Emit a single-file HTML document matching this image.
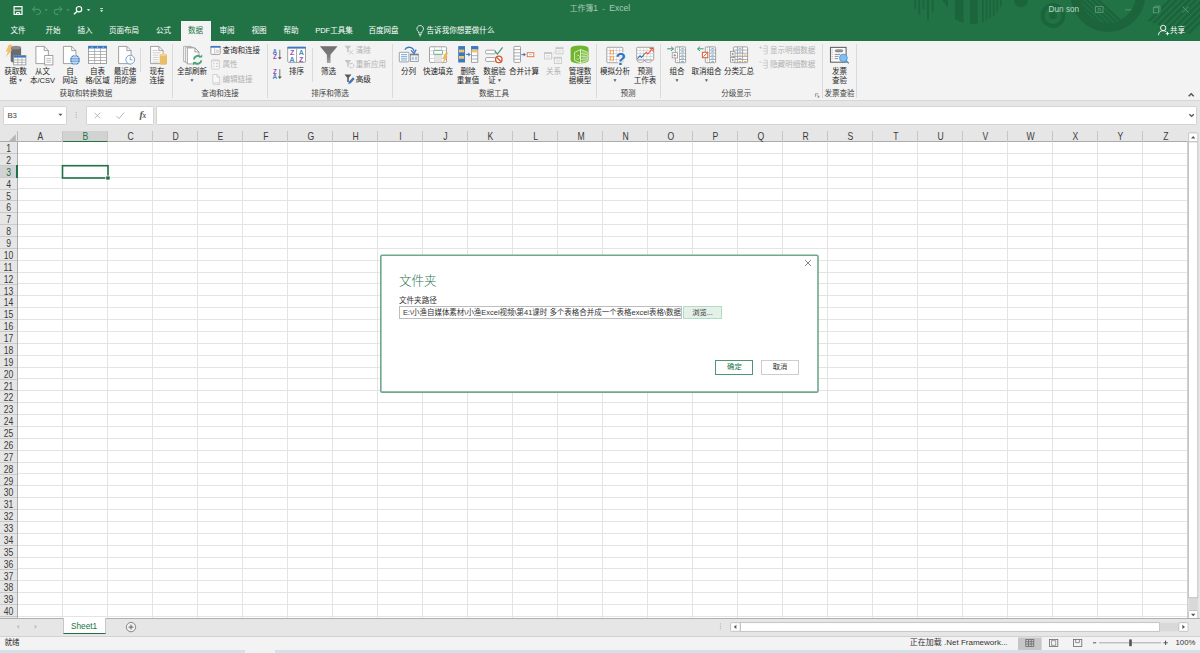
<!DOCTYPE html>
<html lang="zh-CN">
<head>
<meta charset="utf-8">
<title>工作簿1 - Excel</title>
<style>
*{box-sizing:border-box;margin:0;padding:0}
html,body{width:1200px;height:653px;overflow:hidden;background:#fff}
body{font-family:"Liberation Sans","Noto Sans CJK SC",sans-serif;color:#262626;position:relative;-webkit-font-smoothing:antialiased}
.abs{position:absolute}
#app{position:absolute;left:0;top:0;width:1200px;height:653px;overflow:hidden;background:#fff}
/* ---------- title + tabs ---------- */
#top{position:absolute;left:0;top:0;width:1200px;height:41px;background:#217346;overflow:hidden}
#title{position:absolute;left:0;width:1200px;top:3.1px;text-align:center;font-size:7.8px;line-height:11px;color:#a9cbb7;white-space:pre}
#user{position:absolute;left:1048.6px;top:3.6px;font-size:8.2px;line-height:11px;color:#bdd6c7}
.tab{position:absolute;top:24px;height:13px;line-height:13px;font-size:7.55px;color:#fff;white-space:nowrap;transform:translateX(-50%)}
#tabact{position:absolute;left:180.5px;top:21px;width:30.5px;height:20px;background:#f3f3f3}
.tab.act{color:#217346}
/* ---------- ribbon ---------- */
#ribbon{position:absolute;left:0;top:41px;width:1200px;height:59.5px;background:#f3f3f3;border-bottom:1px solid #d6d6d6;overflow:hidden}
.lb{position:absolute;top:26.8px;font-size:7.55px;line-height:8.8px;color:#262626;text-align:center;white-space:nowrap;transform:translateX(-50%)}
.sm{position:absolute;font-size:7.55px;line-height:10px;color:#262626;white-space:nowrap}
.dis{color:#b1b1b1}
.grp{position:absolute;top:47.9px;font-size:7.55px;line-height:10px;color:#444;white-space:nowrap;transform:translateX(-50%)}
.sep{position:absolute;top:2.5px;width:1px;height:54px;background:#dadada}
.cr{position:relative;top:-1.1px;font-size:5.6px;color:#5a5a5a;font-family:"DejaVu Sans",sans-serif}
.ico{position:absolute;overflow:visible}
.car{position:absolute;width:0;height:0;border-left:2px solid transparent;border-right:2px solid transparent;border-top:2.2px solid #555}
/* ---------- formula bar ---------- */
#fbar{position:absolute;left:0;top:101px;width:1200px;height:29.5px;background:#e6e6e6}
.fbox{position:absolute;top:5.4px;height:18.2px;background:#fff;border:1px solid #d4d4d4;border-radius:1.2px}
/* ---------- grid ---------- */
#colhdr{position:absolute;left:0;top:130.5px;width:1188px;height:11.5px;background:#e6e6e6;border-bottom:1px solid #ababab}
.ch{position:absolute;top:0;width:45px;height:11.5px;line-height:12.6px;font-size:9.8px;padding-left:2.2px;text-align:center;color:#3b3b3b;border-right:1px solid #c6c6c6}
#rowhdr{position:absolute;left:0;top:142px;width:17.5px;height:476.5px;background:#e6e6e6;border-right:1px solid #ababab;overflow:hidden}
.rh{position:absolute;left:0;width:16.5px;height:11.875px;line-height:13.7px;font-size:9.8px;text-align:center;color:#3b3b3b;border-bottom:1px solid #c9c9c9}
#cells{position:absolute;left:17.5px;top:142px;width:1170px;height:476.5px;background-color:#fff;border-right:1px solid #b9b9b9;
 background-image:repeating-linear-gradient(to right,transparent 0,transparent 44px,#e4e4e4 44px,#e4e4e4 45px),repeating-linear-gradient(to bottom,transparent 0,transparent 10.875px,#e4e4e4 10.875px,#e4e4e4 11.875px)}
/* ---------- bottom ---------- */
#tabbar{position:absolute;left:0;top:618.3px;width:1200px;height:18px;background:#e6e6e6;border-top:1px solid #b0b0b0}
#status{position:absolute;left:0;top:636px;width:1200px;height:14px;background:#f3f3f3;border-top:1px solid #d2d2d2}
#strip{position:absolute;left:0;top:650px;width:1200px;height:3px;background:#d3e2ea}
.st{position:absolute;font-size:7.8px;line-height:10px;color:#333;white-space:nowrap}
/* ---------- dialog ---------- */
#dlg{position:absolute;left:381px;top:256px;width:436px;height:135px}

.ch span{display:inline-block;transform:scale(.88,1.1)}
.rh span{display:inline-block;transform:scale(.88,1.08)}
.ch.sel{background:#d2d2d2;color:#217346;border-bottom:1.5px solid #217346;height:11.8px}
.rh.sel{background:#d2d2d2;color:#217346;width:17.5px;border-right:1.5px solid #217346}
#selcell{position:absolute;left:61.7px;top:164.8px;width:47.2px;height:14px;border:1.6px solid #217346}
#selh{position:absolute;left:105.6px;top:175.6px;width:4.8px;height:4.6px;background:#1d6a3f;border:.8px solid #fff}
.dtitle{position:absolute;left:17.9px;top:16.6px;font-size:12.6px;line-height:17px;color:#2f7552;font-weight:300}
.dlabel{position:absolute;left:17.9px;top:39.5px;font-size:7.6px;line-height:10px;color:#333}
.dinput{position:absolute;left:17.9px;top:49.7px;width:283px;height:13.4px;border:1px solid #bdbdbd;background:#fff;font-size:7.47px;line-height:12.6px;padding-left:3px;color:#333;white-space:nowrap;overflow:hidden}
.dbtn{position:absolute;height:14.4px;font-size:7.3px;line-height:12.4px;text-align:center;color:#333;background:#fff}
</style>
</head>
<body>
<div id="app">

<!-- ================= TOP (title bar + tabs) ================= -->
<div id="top">
<svg class="ico" style="left:0;top:0" width="1200" height="41" viewBox="0 0 1200 41">
  <defs>
    <clipPath id="cpHalf"><circle cx="972" cy="-9" r="33"/></clipPath>
    <clipPath id="cpRing"><circle cx="1108" cy="-5.4" r="28"/></clipPath>
    <clipPath id="cpR"><path d="M1146 0 h54 v34 h-20 l-34 -14z"/></clipPath>
  </defs>
  <!-- decorative pattern -->
  <g fill="#1c653c" stroke="none">
    <rect x="914.3" y="0" width="1.6" height="9"/><rect x="918.3" y="0" width="1.8" height="14.5"/><rect x="922.6" y="0" width="1.6" height="9"/>
    <rect x="927" y="0" width="2" height="20"/><rect x="931.8" y="0" width="1.8" height="12.5"/>
    <path d="M942 0 h6 v8z"/>
    <g clip-path="url(#cpHalf)">
      <rect x="955" y="0" width="8.5" height="30"/><rect x="970" y="0" width="7.5" height="30"/>
      <rect x="982" y="0" width="1.8" height="30"/><rect x="985.6" y="0" width="1.8" height="30"/><rect x="989.2" y="0" width="1.8" height="30"/><rect x="992.8" y="0" width="1.8" height="30"/><rect x="996.4" y="0" width="1.8" height="30"/><rect x="1000" y="0" width="1.8" height="30"/>
    </g>
    <circle cx="1021" cy="0" r="7.2"/>
  </g>
  <circle cx="1053" cy="15.5" r="10.4" fill="none" stroke="#1c653c" stroke-width="4"/>
  <circle cx="1053" cy="15.5" r="3.8" fill="#1c653c"/>
  <circle cx="1108" cy="-5.4" r="32.7" fill="none" stroke="#1c653c" stroke-width="9.4"/>
  <g clip-path="url(#cpRing)" stroke="#1c653c" stroke-width="2.4">
    <path d="M1066 -4 l48 44 M1071.5 -4 l48 44 M1077 -4 l48 44 M1082.5 -4 l48 44 M1088 -4 l48 44 M1093.5 -4 l48 44"/>
  </g>
  <g clip-path="url(#cpR)" stroke="#1c653c" stroke-width="2.8">
    <path d="M1172 -2 l-36 36 M1178.5 -2 l-36 36 M1185 -2 l-36 36 M1191.5 -2 l-36 36 M1198 -2 l-36 36 M1204.5 -2 l-36 36 M1211 -2 l-36 36 M1217.5 -2 l-36 36 M1224 -2 l-36 36"/>
  </g>
  <!-- QAT: save -->
  <g fill="none" stroke="#fff" stroke-width="1">
    <path d="M14.1 6.6 h7.9 v7.7 h-7.9z" stroke-width="1.2"/><path d="M14.6 10.1 h7" stroke-width="1"/><path d="M16.5 14.2 v-1.7 h3.1 v1.7" stroke-width="1"/>
  </g>
  <!-- undo / redo (faded) -->
  <g fill="none" stroke="#5a9a77" stroke-width="1">
    <path d="M32.6 9.2 h5 a3 2.6 0 0 1 0 5.2 h-1.2"/><path d="M35.2 6.6 l-2.7 2.6 2.7 2.6"/>
    <path d="M62 9.2 h-5 a3 2.6 0 0 0 0 5.2 h1.2"/><path d="M59.4 6.6 l2.7 2.6 -2.7 2.6"/>
  </g>
  <path d="M44.6 9.2 h3 l-1.5 1.7z M66.6 9.2 h3 l-1.5 1.7z" fill="#5a9a77"/>
  <!-- search -->
  <circle cx="79" cy="9.2" r="2.7" fill="none" stroke="#fff" stroke-width="1.2"/><path d="M77 11.4 l-3 2.8" stroke="#fff" stroke-width="1.4"/>
  <path d="M86.8 9.2 h3.4 l-1.7 1.9z" fill="#fff"/>
  <path d="M100.2 8.6 h2.8" stroke="#fff" stroke-width=".8"/><path d="M100 10.2 h3.2 l-1.6 1.9z" fill="#fff"/>
  <!-- window controls (faded) -->
  <g fill="none" stroke="#5c9b79" stroke-width=".9">
    <rect x="1095.4" y="6.6" width="7.6" height="5.8"/><path d="M1098 8.6 h2.4 v2.2 h-2.4z" stroke-width=".7"/>
    <path d="M1125.2 9.8 h6"/>
    <rect x="1153.4" y="7.6" width="5.2" height="5.2"/><path d="M1154.8 7.6 v-1.4 h5.2 v5.2 h-1.4"/>
    <path d="M1182.6 6.6 l6 6 M1188.6 6.6 l-6 6"/>
  </g>
  <!-- lightbulb -->
  <g fill="none" stroke="#fff" stroke-width=".8">
    <path d="M418.6 33 v-1.3 a3.3 3.3 0 1 1 3.2 0 v1.3z"/><path d="M418.9 34.5 h2.6 M419.4 35.9 h1.6"/>
  </g>
  <!-- share -->
  <g fill="none" stroke="#fff" stroke-width=".9">
    <circle cx="1163.2" cy="28" r="2.7"/><path d="M1158.4 35.2 a4.8 4.6 0 0 1 8 -3.4"/><path d="M1165.8 33.6 h3.4 M1167.5 31.9 v3.4"/>
  </g>
</svg>
  <div id="title">工作簿<span style="font-size:8.4px">1</span>  -  <span style="font-size:8.6px">Excel</span></div>
  <div id="user">Dun son</div>
  <div id="tabact"></div>
  <div class="tab" style="left:18px">文件</div>
  <div class="tab" style="left:53px">开始</div>
  <div class="tab" style="left:85px">插入</div>
  <div class="tab" style="left:124px">页面布局</div>
  <div class="tab" style="left:163.5px">公式</div>
  <div class="tab act" style="left:195.5px">数据</div>
  <div class="tab" style="left:227px">审阅</div>
  <div class="tab" style="left:259px">视图</div>
  <div class="tab" style="left:291px">帮助</div>
  <div class="tab" style="left:334px">PDF工具集</div>
  <div class="tab" style="left:383.5px">百度网盘</div>
  <div class="tab" style="left:460.5px">告诉我你想要做什么</div>
  <div class="tab" style="left:1177.5px">共享</div>
</div>

<!-- ================= RIBBON ================= -->
<div id="ribbon">
<svg id="ricons" class="ico" style="left:0;top:0" width="1200" height="60" viewBox="0 41 1200 60">
<defs>
  <linearGradient id="fg" x1="0" y1="0" x2="0" y2="1"><stop offset="0" stop-color="#6f6f6f"/><stop offset=".6" stop-color="#7d7d7d"/><stop offset="1" stop-color="#a9a9a9"/></linearGradient>
</defs>
<!-- get data -->
<g>
  <path d="M10.7 47.3 h10.4 v13.4 a5.2 1.9 0 0 1 -10.4 0z" fill="#6b6b6b"/>
  <ellipse cx="15.9" cy="47.6" rx="5.2" ry="1.9" fill="#8e8e8e"/>
  <path d="M8.9 44.8 h3.6 l-2.5 4.8 h2.3 l-6.6 8 2.2 -6 h-2.2z" fill="#f2c06a"/>
  <rect x="13.7" y="55.6" width="12.2" height="9.3" fill="#fff" stroke="#8c8c8c" stroke-width=".8"/>
  <rect x="13.7" y="55.6" width="12.2" height="2" fill="#3a78c3"/>
  <path d="M13.7 60 h12.2 M13.7 62.4 h12.2 M17.8 57.6 v7.3 M21.9 57.6 v7.3" stroke="#9a9a9a" stroke-width=".7" fill="none"/>
</g>
<!-- from text/csv -->
<g>
  <g transform="translate(35.5 46.0)"><path d="M.4.4 h8.3 l4.2 4.2 v13 h-12.5z" fill="#fff" stroke="#8c8c8c" stroke-width=".8"/><path d="M8.7.4 v4.2 h4.2" fill="none" stroke="#8c8c8c" stroke-width=".8"/></g>
  <rect x="44.7" y="55.6" width="8.2" height="9.3" fill="#fff" stroke="#8c8c8c" stroke-width=".8"/>
  <path d="M46.4 58.4 h4.8 M46.4 60.3 h4.8 M46.4 62.2 h4.8" stroke="#a5a5a5" stroke-width=".7"/>
</g>
<!-- from web -->
<g>
  <g transform="translate(63.0 46.0)"><path d="M.4.4 h8.3 l4.2 4.2 v13 h-12.5z" fill="#fff" stroke="#8c8c8c" stroke-width=".8"/><path d="M8.7.4 v4.2 h4.2" fill="none" stroke="#8c8c8c" stroke-width=".8"/></g>
  <circle cx="75" cy="60" r="4.9" fill="#4a86c8"/>
  <g stroke="#fff" stroke-width=".6" fill="none"><ellipse cx="75" cy="60" rx="2.1" ry="4.4"/><path d="M70.4 60 h9.2 M75 55.4 v9.2 M71.2 57.6 h7.6 M71.2 62.4 h7.6"/></g>
</g>
<!-- from table/range -->
<g>
  <rect x="88.6" y="46.3" width="17.9" height="17.3" fill="#fff" stroke="#8c8c8c" stroke-width=".8"/>
  <rect x="88.2" y="45.9" width="18.7" height="2.6" fill="#3a78c3"/>
  <path d="M91.5 47.2 h1 M97 47.2 h1 M102.7 47.2 h1" stroke="#fff" stroke-width=".8"/>
  <path d="M88.6 51.5 h17.9 M88.6 54.5 h17.9 M88.6 57.5 h17.9 M88.6 60.5 h17.9 M94.6 48.5 v15 M100.5 48.5 v15" stroke="#9a9a9a" stroke-width=".7" fill="none"/>
</g>
<!-- recent sources -->
<g>
  <g transform="translate(118.2 46.0)"><path d="M.4.4 h8.3 l4.2 4.2 v13 h-12.5z" fill="#fff" stroke="#8c8c8c" stroke-width=".8"/><path d="M8.7.4 v4.2 h4.2" fill="none" stroke="#8c8c8c" stroke-width=".8"/></g>
  <circle cx="130.2" cy="59.7" r="4.4" fill="#fff" stroke="#5e9ad4" stroke-width=".9"/>
  <path d="M130.2 56.7 v3.2 h2.2" stroke="#777" stroke-width=".7" fill="none"/>
</g>
<!-- existing connections -->
<g>
  <g transform="translate(150.2 46.0)"><path d="M.4.4 h8.3 l4.2 4.2 v13 h-12.5z" fill="#fff" stroke="#8c8c8c" stroke-width=".8"/><path d="M8.7.4 v4.2 h4.2" fill="none" stroke="#8c8c8c" stroke-width=".8"/></g>
  <path d="M152.6 50.5 h5 M152.6 52.8 h8 M152.6 55.1 h6 M152.6 57.4 h6 M152.6 59.7 h6 M152.6 62 h6" stroke="#b5b5b5" stroke-width=".7"/>
  <path d="M159.6 54.6 h7.4 v8.8 a3.7 1.3 0 0 1 -7.4 0z" fill="#e9bd6a"/>
  <ellipse cx="163.3" cy="54.8" rx="3.7" ry="1.3" fill="#f3d28f"/>
</g>
<!-- refresh all -->
<g>
  <path d="M183.6 46.4 h7.5 v15 h-7.5z" fill="#fff" stroke="#a3a3a3" stroke-width=".8"/>
  <path d="M185.4 47.2 h7.5 v15.4 h-7.5z" fill="#fff" stroke="#a3a3a3" stroke-width=".8"/>
  <path d="M187.3 47.9 h7.6 l4 4 v12 h-11.6z" fill="#fff" stroke="#8c8c8c" stroke-width=".8"/>
  <path d="M194.9 47.9 v4 h4" fill="none" stroke="#8c8c8c" stroke-width=".8"/>
  <circle cx="197.6" cy="59.8" r="5" fill="#f3f3f3"/>
  <path d="M193.9 59.3 a3.8 3.8 0 0 1 6.6 -2.2" fill="none" stroke="#4aa37a" stroke-width="1.9"/>
  <path d="M201.3 60.3 a3.8 3.8 0 0 1 -6.6 2.2" fill="none" stroke="#4aa37a" stroke-width="1.9"/>
  <path d="M199 57.6 h3.2 v-3.2z M196.2 62 h-3.2 v3.2z" fill="#4aa37a"/>
</g>
<!-- queries & connections small -->
<g>
  <rect x="210.9" y="46.4" width="9.3" height="8" rx=".8" fill="#fff" stroke="#8c8c8c" stroke-width=".8"/>
  <rect x="210.5" y="46" width="10.1" height="1.7" fill="#3a78c3"/>
  <rect x="215.6" y="49.4" width="3.4" height="3.6" fill="#dcdcdc"/>
  <path d="M214.6 48 v6.4" stroke="#a9a9a9" stroke-width=".6"/>
</g>
<!-- properties (disabled) -->
<g>
  <rect x="211.7" y="59.8" width="7.8" height="9.2" rx=".6" fill="#f8f8f8" stroke="#c9c9c9" stroke-width=".8"/>
  <path d="M211.7 61 h7.8" stroke="#c9c9c9" stroke-width=".9"/>
  <path d="M213.3 63.7 h1.4 M216 63.7 h2.2 M213.3 66.4 h1.4 M216 66.4 h2.2" stroke="#cbb7d4" stroke-width=".9"/>
</g>
<!-- edit links (disabled) -->
<g>
  <path d="M212.8 74.5 h4.2 l2.6 2.6 v6.8 h-6.8z" fill="#f8f8f8" stroke="#cacaca" stroke-width=".8"/>
  <path d="M217 74.5 v2.6 h2.6" fill="none" stroke="#cacaca" stroke-width=".8"/>
  <path d="M215 82.6 h1.8 a1 1 0 0 1 0 2 h-1.8 a1 1 0 0 1 0 -2z M217.6 82.6 h1.4 a1 1 0 0 1 0 2 h-1.4" fill="#f3f3f3" stroke="#c2c2c2" stroke-width=".6"/>
</g>
<!--G1-->
<!-- sort AZ / ZA -->
<g font-family="Liberation Sans, sans-serif" font-weight="bold" font-size="6.3" text-anchor="middle">
  <text x="274.9" y="54.2" fill="#4a86c8">A</text><text x="274.9" y="59.4" fill="#9a4db0">Z</text>
  <path d="M279.8 49.8 v8.4" stroke="#555" stroke-width=".8"/><path d="M277.9 57.2 h3.8 l-1.9 2.3z" fill="#555"/>
  <text x="274.9" y="73.6" fill="#9a4db0">Z</text><text x="274.9" y="78.8" fill="#4a86c8">A</text>
  <path d="M279.8 69.2 v8.4" stroke="#555" stroke-width=".8"/><path d="M277.9 76.6 h3.8 l-1.9 2.3z" fill="#555"/>
</g>
<!-- sort big -->
<g font-family="Liberation Sans, sans-serif" font-weight="bold" font-size="7" text-anchor="middle">
  <rect x="287.7" y="47.2" width="17.8" height="15.2" rx="1.2" fill="#fff" stroke="#8c8c8c" stroke-width=".8"/>
  <rect x="287.3" y="46.8" width="18.6" height="1.8" fill="#3a78c3"/>
  <path d="M296.6 48.6 v13.8" stroke="#8c8c8c" stroke-width=".8"/>
  <text x="292.1" y="55.4" fill="#9a4db0">Z</text><text x="292.1" y="61.7" fill="#4a86c8">A</text>
  <text x="301.2" y="55.4" fill="#4a86c8">A</text><text x="301.2" y="61.7" fill="#9a4db0">Z</text>
</g>
<!-- filter big -->
<path d="M319.9 46.3 h17.6 l-7 8.4 v8.3 h-3.6 v-8.3z" fill="url(#fg)"/>
<!-- clear (disabled) -->
<g>
  <path d="M344.6 45.7 h6.6 l-2.6 3.2 v3.4 h-1.4 v-3.4z" fill="#c3c3c3"/>
  <path d="M348.8 50.2 l4.6 4.4 M353.4 50.2 l-4.6 4.4" stroke="#c9c9c9" stroke-width=".9"/>
</g>
<!-- reapply (disabled) -->
<g>
  <path d="M344.6 60 h6.6 l-2.6 3.2 v3.6 h-1.4 v-3.6z" fill="#c3c3c3"/>
  <path d="M349.4 66.3 a2.3 2.3 0 1 0 1 -2.6" fill="none" stroke="#c6c6c6" stroke-width=".9"/>
  <path d="M349.3 62.6 l2.3 .6 -1.7 1.7z" fill="#c6c6c6"/>
</g>
<!-- advanced -->
<g>
  <path d="M344.5 74.4 h7 l-2.7 3.3 v4.2 h-1.6 v-4.2z" fill="#595959"/>
  <path d="M348.1 84.2 l.9 -2.6 4 -4.3 1.7 1.6 -4 4.3z" fill="#3a78c3"/>
</g>
<!-- text to columns -->
<g>
  <rect x="399.3" y="52.3" width="9.6" height="9.6" rx=".6" fill="#fff" stroke="#8c8c8c" stroke-width=".8"/>
  <path d="M401 54.6 h6.2 M401 56.4 h6.2 M401 58.2 h6.2 M401 60 h6.2" stroke="#5b9bd5" stroke-width=".8"/>
  <rect x="410.4" y="54.2" width="7.8" height="7.2" fill="#fff" stroke="#8c8c8c" stroke-width=".8"/>
  <rect x="410" y="53.8" width="8.6" height="1.6" fill="#7f7f7f"/>
  <rect x="411.6" y="56.6" width="2.2" height="3.6" fill="#a9c9ea"/><rect x="414.8" y="56.6" width="2.2" height="3.6" fill="#a9c9ea"/>
  <path d="M404.9 49.6 a4.7 4.2 0 0 1 8.9 1.6" fill="none" stroke="#3a78c3" stroke-width="1.3"/>
  <path d="M411 50.4 l3 3 2.2 -3.8" fill="none" stroke="#3a78c3" stroke-width="1.3"/>
</g>
<!-- flash fill -->
<g>
  <rect x="429.5" y="46.8" width="17" height="15.6" rx=".8" fill="#fff" stroke="#8c8c8c" stroke-width=".8"/>
  <path d="M429.5 50.7 h17 M429.5 54.6 h17 M429.5 58.5 h17 M434.5 46.8 v15.6 M441.6 46.8 v15.6" stroke="#bcbcbc" stroke-width=".6"/>
  <rect x="434.5" y="54.6" width="7.1" height="7.8" fill="#e4e4e4"/>
  <rect x="433.7" y="50.3" width="8.8" height="4" rx="1.1" fill="#fff" stroke="#5aa582" stroke-width=".9"/>
  <path d="M445.4 52.8 h2.8 l-2.2 4 h1.7 l-5.6 7.6 2 -5.6 h-1.7z" fill="#f0b85a"/>
</g>
<!-- remove duplicates -->
<g>
  <rect x="458.2" y="46.1" width="6.8" height="16.4" fill="#3a78c3"/>
  <rect x="459" y="49.6" width="5.2" height="2.8" fill="#f2c468"/><rect x="459" y="56" width="5.2" height="2.8" fill="#f2c468"/>
  <path d="M466 54.4 h3.3" stroke="#3a78c3" stroke-width="1"/><path d="M468.3 52.4 l2.4 2 -2.4 2z" fill="#3a78c3"/>
  <rect x="471.6" y="46.5" width="6.2" height="15.8" fill="#fff" stroke="#8c8c8c" stroke-width=".8"/>
  <rect x="471.2" y="46.1" width="7" height="3.4" fill="#3a78c3"/><rect x="472" y="49.6" width="5.4" height="2.8" fill="#f2c468"/>
  <path d="M471.6 55.7 h6.2 M471.6 59 h6.2" stroke="#8c8c8c" stroke-width=".7"/>
</g>
<!-- data validation -->
<g>
  <rect x="485.6" y="50.2" width="10" height="3.6" rx="1.2" fill="#fff" stroke="#8c8c8c" stroke-width=".8"/>
  <rect x="485.6" y="57.6" width="10" height="3.8" rx="1.2" fill="#fff" stroke="#8c8c8c" stroke-width=".8"/>
  <path d="M494.6 51.2 l2.8 2.8 5.2 -6.6" fill="none" stroke="#3f9a72" stroke-width="1.2"/>
  <circle cx="498.8" cy="59.4" r="3.2" fill="#fff" stroke="#d8512e" stroke-width="1.3"/>
  <path d="M496.7 57.3 l4.2 4.2" stroke="#d8512e" stroke-width="1.2"/>
</g>
<!-- consolidate -->
<g>
  <rect x="513.9" y="46.4" width="6.6" height="16" rx=".8" fill="#fff" stroke="#8c8c8c" stroke-width=".8"/>
  <path d="M513.9 49.6 h6.6 M513.9 52.8 h6.6 M513.9 56 h6.6 M513.9 59.2 h6.6" stroke="#8c8c8c" stroke-width=".7"/>
  <path d="M521.4 54.6 h3.2" stroke="#3a78c3" stroke-width="1"/><path d="M523.6 52.7 l2.4 1.9 -2.4 1.9z" fill="#3a78c3"/>
  <rect x="527.2" y="52.7" width="6.6" height="4" fill="#fff" stroke="#e0703c" stroke-width=".9"/>
  <path d="M529 54.7 h3" stroke="#9a9a9a" stroke-width=".6"/>
</g>
<!-- relationships (disabled) -->
<g fill="#f7f7f7" stroke="#c6c6c6" stroke-width=".8">
  <path d="M551.5 55.2 l4.4 -4 M551.5 56 l3 4" fill="none" stroke-width=".6"/>
  <rect x="544.4" y="52.4" width="7" height="6.6"/><rect x="556" y="47.3" width="7" height="6.6"/><rect x="554.6" y="57.2" width="7" height="6.4"/>
  <path d="M544.4 53.4 h7 M556 48.3 h7 M554.6 58.2 h7" stroke-width="1.2"/>
  <path d="M546 55.6 h3.8 M546 57.2 h3.8 M557.6 50.6 h3.8 M557.6 52.2 h3.8 M556.2 60.4 h3.8 M556.2 62 h3.8" stroke="#d4c6da" stroke-width=".6"/>
</g>
<!-- manage data model -->
<g>
  <path d="M570.6 48.6 a9 3.2 0 0 1 18 0 v11.6 a9 3.2 0 0 1 -18 0z" fill="#70b62c"/>
  <path d="M574.6 52.4 l6 -2.8 v13.4 l-6 -2.6z" fill="#70b62c" stroke="#fff" stroke-width=".7"/>
  <path d="M580.6 49.6 l6.6 2.4 v8.6 l-6.6 2.4z" fill="#70b62c" stroke="#fff" stroke-width=".7"/>
  <path d="M583 50.6 v11.6 M585 51.4 v10 M580.6 53 l6.6 1.6 M580.6 56.2 l6.6 .6 M580.6 59.4 l6.6 -.6" stroke="#fff" stroke-width=".5"/>
  <path d="M576.4 58.4 a1.9 1.9 0 1 0 1.6 -3 m0 0 l-1 -1 m1 1 l-1 1" fill="none" stroke="#fff" stroke-width=".6"/>
</g>
<!--G2-->
<!-- what-if analysis -->
<g>
  <rect x="606.8" y="47.3" width="16" height="15.4" rx=".8" fill="#fff" stroke="#8c8c8c" stroke-width=".8"/>
  <path d="M606.8 50.4 h16 M606.8 53.5 h16 M606.8 56.6 h16 M606.8 59.7 h16 M610 47.3 v15.4 M613.2 47.3 v15.4 M616.4 47.3 v15.4 M619.6 47.3 v15.4" stroke="#c4c4c4" stroke-width=".6"/>
  <rect x="610.3" y="50.7" width="3.2" height="3.2" fill="#fff" stroke="#ee9a4d" stroke-width=".9"/>
  <rect x="610.3" y="56.8" width="3.2" height="3.2" fill="#fff" stroke="#ee9a4d" stroke-width=".9"/>
  <text x="620.8" y="65.4" font-family="Liberation Sans, sans-serif" font-weight="bold" font-size="17" text-anchor="middle" fill="#f3f3f3" stroke="#f3f3f3" stroke-width="2">?</text>
  <text x="620.8" y="65.4" font-family="Liberation Sans, sans-serif" font-weight="bold" font-size="17" text-anchor="middle" fill="#2f74c0">?</text>
</g>
<!-- forecast sheet -->
<g>
  <rect x="636.7" y="47.3" width="17" height="12.8" rx=".8" fill="#fff" stroke="#8c8c8c" stroke-width=".8"/>
  <path d="M636.7 50.4 h17 M636.7 53.5 h17 M636.7 56.6 h17 M640.1 47.3 v12.8 M643.5 47.3 v12.8 M646.9 47.3 v12.8 M650.3 47.3 v12.8" stroke="#c4c4c4" stroke-width=".6"/>
  <path d="M637 60.1 h7.4 a3.7 2.4 0 0 1 -7.4 0z M644.8 60.1 h7 a3.5 2.4 0 0 1 -7 0z" fill="#fff" stroke="#8c8c8c" stroke-width=".7"/>
  <path d="M637.4 58.6 l2.6 -2.8 1.6 1.6 2.6 -3" fill="none" stroke="#3a78c3" stroke-width="1.1"/>
  <path d="M644.2 54.4 l2 -2.2 1.6 1.8 4 -4.6" fill="none" stroke="#e0593a" stroke-width="1.1"/>
  <path d="M649.6 48.4 h3.4 v3.4" fill="none" stroke="#e0593a" stroke-width="1.1"/>
</g>
<!-- group -->
<g>
  <rect x="675.3" y="46.9" width="10.3" height="15.8" rx=".8" fill="#fff" stroke="#8c8c8c" stroke-width=".8"/>
  <path d="M679.6 46.9 v15.8 M679.6 50.1 h6 M679.6 53.2 h6 M679.6 56.4 h6 M679.6 59.5 h6" stroke="#8c8c8c" stroke-width=".7"/>
  <path d="M677.4 47.4 v15" stroke="#8c8c8c" stroke-width=".6" stroke-dasharray=".9 .9"/>
  <path d="M681 49.2 a1.6 1 0 0 1 3.2 0 M681 52.3 a1.6 1 0 0 1 3.2 0 M681 55.5 a1.6 1 0 0 1 3.2 0 M681 58.6 a1.6 1 0 0 1 3.2 0 M681 61.8 a1.6 1 0 0 1 3.2 0" fill="#5b9bd5" stroke="none"/>
  <rect x="672.2" y="52.7" width="5.2" height="5.2" fill="#fff" stroke="#8c8c8c" stroke-width=".7"/>
  <path d="M673.4 55.3 h2.8 M674.8 53.9 v2.8" stroke="#666" stroke-width=".6"/>
  <path d="M667.2 48.8 h6" stroke="#3f9a72" stroke-width="1"/><path d="M671 46.6 l2.5 2.2 -2.5 2.2" fill="none" stroke="#3f9a72" stroke-width="1"/>
</g>
<!-- ungroup -->
<g>
  <rect x="705.3" y="46.9" width="10.3" height="15.8" rx=".8" fill="#fff" stroke="#8c8c8c" stroke-width=".8"/>
  <path d="M709.6 46.9 v15.8 M709.6 50.1 h6 M709.6 53.2 h6 M709.6 56.4 h6 M709.6 59.5 h6" stroke="#8c8c8c" stroke-width=".7"/>
  <path d="M707.4 47.4 v15" stroke="#8c8c8c" stroke-width=".6" stroke-dasharray=".9 .9"/>
  <path d="M711 49.2 a1.6 1 0 0 1 3.2 0 M711 52.3 a1.6 1 0 0 1 3.2 0 M711 55.5 a1.6 1 0 0 1 3.2 0 M711 58.6 a1.6 1 0 0 1 3.2 0 M711 61.8 a1.6 1 0 0 1 3.2 0" fill="#5b9bd5" stroke="none"/>
  <rect x="702.4" y="52.3" width="5.4" height="5.4" fill="#fff" stroke="#e0593a" stroke-width="1"/>
  <path d="M703.4 56.7 l3.4 -3.4" stroke="#e0593a" stroke-width="1"/>
  <path d="M697.6 48.8 h6" stroke="#3f9a72" stroke-width="1"/><path d="M700.1 46.6 l-2.5 2.2 2.5 2.2" fill="none" stroke="#3f9a72" stroke-width="1"/>
</g>
<!-- subtotal -->
<g>
  <rect x="733.4" y="46.9" width="14.2" height="15.8" rx=".8" fill="#fff" stroke="#8c8c8c" stroke-width=".8"/>
  <path d="M737.4 46.9 v15.8 M742.6 46.9 v15.8 M733.4 50.1 h14.2 M733.4 53.2 h14.2 M733.4 56.4 h14.2 M733.4 59.5 h14.2" stroke="#8c8c8c" stroke-width=".7"/>
  <path d="M738.4 49.3 a1.6 1 0 0 1 3.2 0 M738.4 52.4 a1.6 1 0 0 1 3.2 0 M738.4 58.7 a1.6 1 0 0 1 3.2 0" fill="#5b9bd5"/>
  <path d="M738.4 55.6 a1.6 1 0 0 1 3.2 0 M743.6 55.6 a1.6 1 0 0 1 3.2 0 M738.4 61.9 a1.6 1 0 0 1 3.2 0 M743.6 61.9 a1.6 1 0 0 1 3.2 0" fill="#ee9a4d"/>
  <rect x="730.4" y="51.6" width="4.6" height="4.6" fill="#fff" stroke="#8c8c8c" stroke-width=".7"/><path d="M731.5 53.9 h2.4 M732.7 52.7 v2.4" stroke="#666" stroke-width=".6"/>
  <rect x="730.4" y="57.6" width="4.6" height="4.6" fill="#fff" stroke="#8c8c8c" stroke-width=".7"/><path d="M731.5 59.9 h2.4 M732.7 58.7 v2.4" stroke="#666" stroke-width=".6"/>
</g>
<!-- show/hide detail (disabled) -->
<g stroke="#c4c4c4" fill="none" stroke-width=".8">
  <path d="M759.2 47.6 h2.6 M760.5 46.3 v2.6" />
  <path d="M764 45.8 h3.2 v8 h-3.2 M762.8 48.4 h4.4 M762.8 51 h4.4"/>
  <path d="M759.2 62 h2.6"/>
  <path d="M764 60.2 h3.2 v8 h-3.2 M762.8 62.8 h4.4 M762.8 65.4 h4.4"/>
</g>
<!-- dialog launcher -->
<path d="M815.4 96.8 v-3 h3 M817 95.2 l1.8 1.8 M819 95.6 v1.6 h-1.6" fill="none" stroke="#666" stroke-width=".6"/>
<!-- invoice check -->
<g>
  <rect x="830.5" y="47.4" width="15.6" height="14.8" fill="#fbfbfb" stroke="#666" stroke-width="1.1"/>
  <path d="M832.2 49.6 v10.8" stroke="#777" stroke-width=".8" stroke-dasharray=".8 1.4"/>
  <rect x="835.2" y="49.7" width="7.6" height="2.2" rx="1.1" fill="#9a9a9a" stroke="#666" stroke-width=".5"/>
  <path d="M834.6 54.4 h5.6 M834.6 56.4 h4 M834.6 58.6 h3.4" stroke="#777" stroke-width=".8"/>
  <path d="M846 60.6 l2.8 2.8" stroke="#3c86c6" stroke-width="1.3"/>
  <circle cx="843.4" cy="58" r="3.9" fill="#86bdee" stroke="#4c93d2" stroke-width=".8"/>
</g>
<!-- collapse ribbon chevron -->
<path d="M1188.7 96.3 l2.5 -2.5 2.5 2.5" fill="none" stroke="#4f4f4f" stroke-width="1.4"/>
<!--G3-->
<!--G4-->
<!--G5-->
<!--G6-->
<!--G7-->
</svg>
  <div class="lb" style="left:15.5px">获取数<br>据 <span class="cr">▾</span></div>
  <div class="lb" style="left:42.5px">从文<br>本/CSV</div>
  <div class="lb" style="left:70px">自<br>网站</div>
  <div class="lb" style="left:97.5px">自表<br>格/区域</div>
  <div class="lb" style="left:125px">最近使<br>用的源</div>
  <div class="lb" style="left:157px">现有<br>连接</div>
  <div class="lb" style="left:192px">全部刷新<br><span class="cr">▾</span></div>
  <div class="lb" style="left:296.5px">排序</div>
  <div class="lb" style="left:328.5px">筛选</div>
  <div class="lb" style="left:408.5px">分列</div>
  <div class="lb" style="left:438px">快速填充</div>
  <div class="lb" style="left:468px">删除<br>重复值</div>
  <div class="lb" style="left:494.5px">数据验<br>证 <span class="cr">▾</span></div>
  <div class="lb" style="left:524px">合并计算</div>
  <div class="lb dis" style="left:553.5px">关系</div>
  <div class="lb" style="left:580px">管理数<br>据模型</div>
  <div class="lb" style="left:615px">模拟分析<br><span class="cr">▾</span></div>
  <div class="lb" style="left:645px">预测<br>工作表</div>
  <div class="lb" style="left:677px">组合<br><span class="cr">▾</span></div>
  <div class="lb" style="left:706.5px">取消组合<br><span class="cr">▾</span></div>
  <div class="lb" style="left:739px">分类汇总</div>
  <div class="lb" style="left:839.5px">发票<br>查验</div>
  <div class="sm" style="left:222.4px;top:5.0px">查询和连接</div>
  <div class="sm dis" style="left:222.4px;top:19.2px">属性</div>
  <div class="sm dis" style="left:222.4px;top:33.7px">编辑链接</div>
  <div class="sm dis" style="left:355.8px;top:5.2px">清除</div>
  <div class="sm dis" style="left:355.8px;top:19.2px">重新应用</div>
  <div class="sm" style="left:355.8px;top:33.7px">高级</div>
  <div class="sm dis" style="left:770px;top:4.7px">显示明细数据</div>
  <div class="sm dis" style="left:770px;top:19.2px">隐藏明细数据</div>
  <div class="grp" style="left:86px">获取和转换数据</div>
  <div class="grp" style="left:220px">查询和连接</div>
  <div class="grp" style="left:330px">排序和筛选</div>
  <div class="grp" style="left:494px">数据工具</div>
  <div class="grp" style="left:628px">预测</div>
  <div class="grp" style="left:736.3px">分级显示</div>
  <div class="grp" style="left:839.5px">发票查验</div>
  <div class="sep" style="left:172.0px"></div>
  <div class="sep" style="left:266.5px"></div>
  <div class="sep" style="left:392.0px"></div>
  <div class="sep" style="left:595.5px"></div>
  <div class="sep" style="left:660.1px"></div>
  <div class="sep" style="left:822.0px"></div>
  <div class="sep" style="left:856.0px"></div>
  <div class="sep" style="left:140.2px;top:7px;height:24px"></div>
  <div class="sep" style="left:311.9px;top:7px;height:34px"></div>
</div>

<!-- ================= FORMULA BAR ================= -->
<div id="fbar">
  <div class="fbox" style="left:3px;width:63.5px"></div>
  <div class="fbox" style="left:85.5px;width:68.5px"></div>
  <div class="fbox" style="left:156.3px;width:1040.6px"></div>
  <div class="abs" style="left:7.4px;top:9.3px;font-size:7.8px;line-height:11px;color:#444">B3</div>
  <div class="abs" style="left:137.5px;top:7.2px;width:10px;text-align:center;font-family:'Liberation Serif',serif;font-style:italic;font-weight:bold;font-size:10.4px;line-height:13px;color:#5a5a5a;letter-spacing:-.5px">f<span style="font-size:7.4px">x</span></div>
  <svg class="ico" style="left:0;top:0" width="1200" height="29" viewBox="0 101 1200 29">
    <path d="M58.4 113.8 h4 l-2 2.2z" fill="#555"/>
    <path d="M76.2 112.3 v.9 M76.2 114.6 v.9 M76.2 116.9 v.9" stroke="#9a9a9a" stroke-width=".9"/>
    <path d="M94.6 112.8 l5.6 5.6 M100.2 112.8 l-5.6 5.6" stroke="#a9a9a9" stroke-width=".8" fill="none"/>
    <path d="M116.6 116.2 l2.4 2.4 5 -6" stroke="#a9a9a9" stroke-width=".9" fill="none"/>
    <path d="M1189.4 114.2 l2.2 2.2 2.2 -2.2" stroke="#4f4f4f" stroke-width="1.3" fill="none"/>
  </svg>
</div>

<!-- ================= GRID ================= -->
<div id="colhdr">
  <div class="abs" style="left:0;top:0;width:17.5px;height:11.5px;border-right:1px solid #b9b9b9"><svg class="ico" style="left:0;top:0" width="17.5" height="11.5" viewBox="0 0 17.5 11.5"><path d="M15.8 3.2 v7.2 h-7.2z" fill="#b5b5b5"/></svg></div>
  <div class="ch" style="left:17.5px"><span>A</span></div>
  <div class="ch sel" style="left:62.5px"><span>B</span></div>
  <div class="ch" style="left:107.5px"><span>C</span></div>
  <div class="ch" style="left:152.5px"><span>D</span></div>
  <div class="ch" style="left:197.5px"><span>E</span></div>
  <div class="ch" style="left:242.5px"><span>F</span></div>
  <div class="ch" style="left:287.5px"><span>G</span></div>
  <div class="ch" style="left:332.5px"><span>H</span></div>
  <div class="ch" style="left:377.5px"><span>I</span></div>
  <div class="ch" style="left:422.5px"><span>J</span></div>
  <div class="ch" style="left:467.5px"><span>K</span></div>
  <div class="ch" style="left:512.5px"><span>L</span></div>
  <div class="ch" style="left:557.5px"><span>M</span></div>
  <div class="ch" style="left:602.5px"><span>N</span></div>
  <div class="ch" style="left:647.5px"><span>O</span></div>
  <div class="ch" style="left:692.5px"><span>P</span></div>
  <div class="ch" style="left:737.5px"><span>Q</span></div>
  <div class="ch" style="left:782.5px"><span>R</span></div>
  <div class="ch" style="left:827.5px"><span>S</span></div>
  <div class="ch" style="left:872.5px"><span>T</span></div>
  <div class="ch" style="left:917.5px"><span>U</span></div>
  <div class="ch" style="left:962.5px"><span>V</span></div>
  <div class="ch" style="left:1007.5px"><span>W</span></div>
  <div class="ch" style="left:1052.5px"><span>X</span></div>
  <div class="ch" style="left:1097.5px"><span>Y</span></div>
  <div class="ch" style="left:1142.5px;border-right:none"><span>Z</span></div>
</div>
<div id="rowhdr">
  <div class="rh" style="top:0.0px"><span>1</span></div>
  <div class="rh" style="top:11.875px"><span>2</span></div>
  <div class="rh sel" style="top:23.75px"><span>3</span></div>
  <div class="rh" style="top:35.625px"><span>4</span></div>
  <div class="rh" style="top:47.5px"><span>5</span></div>
  <div class="rh" style="top:59.375px"><span>6</span></div>
  <div class="rh" style="top:71.25px"><span>7</span></div>
  <div class="rh" style="top:83.125px"><span>8</span></div>
  <div class="rh" style="top:95.0px"><span>9</span></div>
  <div class="rh" style="top:106.875px"><span>10</span></div>
  <div class="rh" style="top:118.75px"><span>11</span></div>
  <div class="rh" style="top:130.625px"><span>12</span></div>
  <div class="rh" style="top:142.5px"><span>13</span></div>
  <div class="rh" style="top:154.375px"><span>14</span></div>
  <div class="rh" style="top:166.25px"><span>15</span></div>
  <div class="rh" style="top:178.125px"><span>16</span></div>
  <div class="rh" style="top:190.0px"><span>17</span></div>
  <div class="rh" style="top:201.875px"><span>18</span></div>
  <div class="rh" style="top:213.75px"><span>19</span></div>
  <div class="rh" style="top:225.625px"><span>20</span></div>
  <div class="rh" style="top:237.5px"><span>21</span></div>
  <div class="rh" style="top:249.375px"><span>22</span></div>
  <div class="rh" style="top:261.25px"><span>23</span></div>
  <div class="rh" style="top:273.125px"><span>24</span></div>
  <div class="rh" style="top:285.0px"><span>25</span></div>
  <div class="rh" style="top:296.875px"><span>26</span></div>
  <div class="rh" style="top:308.75px"><span>27</span></div>
  <div class="rh" style="top:320.625px"><span>28</span></div>
  <div class="rh" style="top:332.5px"><span>29</span></div>
  <div class="rh" style="top:344.375px"><span>30</span></div>
  <div class="rh" style="top:356.25px"><span>31</span></div>
  <div class="rh" style="top:368.125px"><span>32</span></div>
  <div class="rh" style="top:380.0px"><span>33</span></div>
  <div class="rh" style="top:391.875px"><span>34</span></div>
  <div class="rh" style="top:403.75px"><span>35</span></div>
  <div class="rh" style="top:415.625px"><span>36</span></div>
  <div class="rh" style="top:427.5px"><span>37</span></div>
  <div class="rh" style="top:439.375px"><span>38</span></div>
  <div class="rh" style="top:451.25px"><span>39</span></div>
  <div class="rh" style="top:463.125px"><span>40</span></div>
</div>
<div id="cells"></div>
<div class="abs" style="left:16.4px;top:165.3px;width:1.6px;height:12.6px;background:#217346"></div>
<svg class="ico" style="left:55px;top:160px" width="60" height="24" viewBox="55 160 60 24">
  <rect x="62.5" y="165.7" width="45.5" height="12.3" fill="none" stroke="#217346" stroke-width="1.6"/>
  <rect x="105.4" y="175.6" width="4.9" height="4.6" fill="#fff"/>
  <rect x="106.2" y="176.4" width="3.5" height="3.2" fill="#1d6a3f"/>
</svg>
<svg class="ico" style="left:1187.5px;top:130.5px" width="12.5" height="489" viewBox="1188 130.5 12.5 489">
  <rect x="1187.5" y="130.5" width="12.5" height="489" fill="#e6e6e6"/>
  <rect x="1188.6" y="141.3" width="9.2" height="468.6" fill="#d9d9d9"/>
  <rect x="1188.6" y="132.4" width="9.2" height="8.8" rx=".8" fill="#fff" stroke="#b4b4b4" stroke-width=".7"/>
  <path d="M1191 138 h4.4 l-2.2 -2.6z" fill="#555"/>
  <rect x="1188.6" y="141.4" width="9.2" height="455.8" fill="#fff" stroke="#b4b4b4" stroke-width=".7"/>
  <rect x="1188.6" y="610" width="9.2" height="8.8" rx=".8" fill="#fff" stroke="#b4b4b4" stroke-width=".7"/>
  <path d="M1191 613.2 h4.4 l-2.2 2.6z" fill="#555"/>
</svg>


<!-- ================= BOTTOM ================= -->
<div id="tabbar">
  <div class="abs" style="left:62.5px;top:-1px;width:43.2px;height:15.6px;background:#fff;border-left:1px solid #c6c6c6;border-right:1px solid #c6c6c6;border-bottom:1.5px solid #217346;font-size:8.3px;line-height:16.6px;text-align:center;color:#217346">Sheet1</div>
  <svg class="ico" style="left:0;top:0" width="1200" height="18" viewBox="0 620.1 1200 18">
    <path d="M19.2 625.6 v4.6 l-2.6 -2.3z M34.6 625.6 v4.6 l2.6 -2.3z" fill="#c3c3c3"/>
    <circle cx="131" cy="628.2" r="4.7" fill="#f0f0f0" stroke="#6e6e6e" stroke-width=".8"/>
    <path d="M128.6 628.2 h4.8 M131 625.8 v4.8" stroke="#555" stroke-width=".9"/>
    <path d="M720.4 624.6 v.9 M720.4 627 v.9 M720.4 629.4 v.9" stroke="#9a9a9a" stroke-width=".9"/>
    <rect x="730.6" y="623.8" width="457.4" height="8.6" fill="#d9d9d9"/>
    <rect x="730.6" y="623.8" width="9.6" height="8.6" rx=".8" fill="#fff" stroke="#b4b4b4" stroke-width=".7"/>
    <path d="M736.4 625.8 v4.4 l-2.6 -2.2z" fill="#555"/>
    <rect x="740.4" y="623.8" width="419.2" height="8.6" fill="#fff" stroke="#b4b4b4" stroke-width=".7"/>
    <rect x="1178.8" y="623.8" width="9.2" height="8.6" rx=".8" fill="#fff" stroke="#b4b4b4" stroke-width=".7"/>
    <path d="M1182.4 625.8 v4.4 l2.6 -2.2z" fill="#555"/>
  </svg>
</div>
<div id="status">
  <div class="st" style="left:4.6px;top:1.4px;font-size:7.5px">就绪</div>
  <div class="st" style="left:909.8px;top:1.2px;font-size:8px">正在加载 .Net Framework...</div>
  <div class="st" style="left:1175.5px;top:1.4px;font-size:7.8px">100%</div>
  <svg class="ico" style="left:0;top:0" width="1200" height="14" viewBox="0 637 1200 14">
    <rect x="1018" y="637.5" width="23.6" height="12.5" fill="#c6c6c6"/>
    <g fill="none" stroke="#6a6a6a" stroke-width=".8">
      <rect x="1025.8" y="639.4" width="8" height="7"/><path d="M1025.8 641.7 h8 M1025.8 644 h8 M1028.5 639.4 v7 M1031.2 639.4 v7"/>
      <rect x="1049.4" y="639.4" width="8.4" height="7"/><rect x="1051.4" y="640.8" width="4.4" height="4.4" stroke-width=".6"/>
      <rect x="1073.4" y="639.4" width="8.4" height="7"/><path d="M1075.6 639.4 v3.2 h3.8 v-3.2" stroke-width=".7"/>
    </g>
    <path d="M1093 642.8 h3.2" stroke="#555" stroke-width="1"/>
    <path d="M1099 642.8 h62" stroke="#8a8a8a" stroke-width=".7"/>
    <rect x="1129.2" y="639.4" width="2.6" height="6.8" fill="#555"/>
    <path d="M1163.4 642.8 h4.4 M1165.6 640.6 v4.4" stroke="#555" stroke-width="1"/>
  </svg>
</div>
<div id="strip"><div class="abs" style="left:245px;top:0;width:30px;height:3px;background:#eef3f6"></div></div>

<!-- ================= DIALOG ================= -->
<div id="dlg">
  <svg class="ico" style="left:-11px;top:-11px" width="460" height="160" viewBox="370 245 460 160"><rect x="380.8" y="255.3" width="437.2" height="136.8" rx="1.2" fill="#fff" stroke="#6fa98b" stroke-width="1.6"/></svg>
  <svg class="ico" style="left:422.8px;top:3.3px" width="8" height="8" viewBox="0 0 8 8"><path d="M1 1 L7 7 M7 1 L1 7" stroke="#6a6a6a" stroke-width=".8" fill="none"/></svg>
  <div class="dtitle">文件夹</div>
  <div class="dlabel">文件夹路径</div>
  <div class="dinput">E:\小渔自媒体素材\小渔Excel视频\第41课时 多个表格合并成一个表格excel表格\数据</div>
  <div class="dbtn" style="left:302.4px;top:49.7px;width:38.2px;height:13.4px;background:#e4f1e9;border:1px solid #b3dcc5;line-height:11.8px">浏览...</div>
  <div class="dbtn" style="left:334.4px;top:104.2px;width:38px;border:1.4px solid #4e9673;color:#217346;line-height:11.6px">确定</div>
  <div class="dbtn" style="left:380.1px;top:104.2px;width:38px;border:1px solid #cdcdcd">取消</div>
</div>

</div>
</body>
</html>
